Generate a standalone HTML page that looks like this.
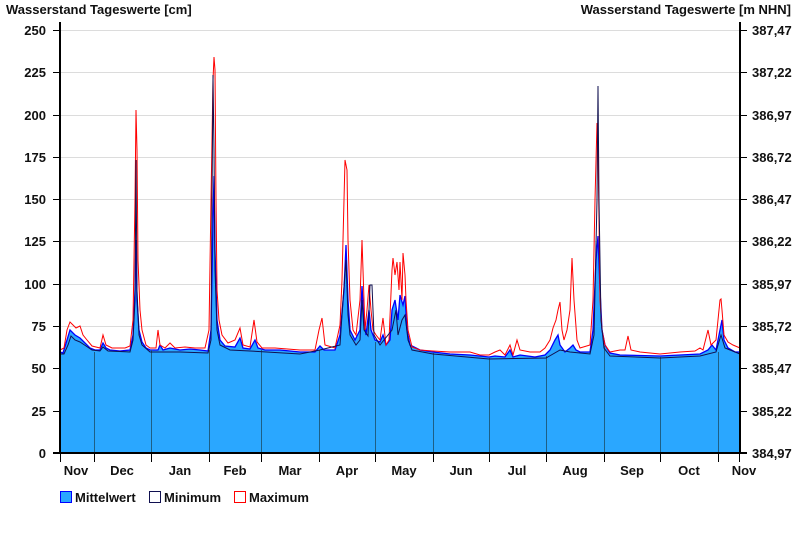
<!DOCTYPE html>
<html><head><meta charset="utf-8">
<style>
html,body{margin:0;padding:0;background:#fff;width:800px;height:550px;overflow:hidden}
svg text{font-family:"Liberation Sans",Arial,sans-serif;font-weight:bold;font-size:13px;fill:#111}
</style></head><body>
<svg width="800" height="550" viewBox="0 0 800 550" xmlns="http://www.w3.org/2000/svg">
<text x="6" y="14">Wasserstand Tageswerte [cm]</text>
<text x="791" y="14" text-anchor="end">Wasserstand Tageswerte [m NHN]</text>
<!-- grid -->
<g stroke="#dcdcdc" stroke-width="1">
<line x1="60" x2="740" y1="30.5" y2="30.5"/><line x1="60" x2="740" y1="72.5" y2="72.5"/>
<line x1="60" x2="740" y1="115.5" y2="115.5"/><line x1="60" x2="740" y1="157.5" y2="157.5"/>
<line x1="60" x2="740" y1="199.5" y2="199.5"/><line x1="60" x2="740" y1="241.5" y2="241.5"/>
<line x1="60" x2="740" y1="284.5" y2="284.5"/><line x1="60" x2="740" y1="326.5" y2="326.5"/>
<line x1="60" x2="740" y1="368.5" y2="368.5"/><line x1="60" x2="740" y1="411.5" y2="411.5"/>
</g>
<!-- mean fill -->
<polygon fill="#2aa7ff" stroke="#0000ff" stroke-width="1.3" points="60,352 63,353 67,340 70,330 75,335 80,338 85,343 90,348 95,350 100,350 103,343 106,348 110,350 120,351 130,350 133,335 135,290 136,240 137,300 139,330 142,342 146,348 150,350 158,350 160,345 163,350 170,348 180,350 190,349 200,350 208,351 211,330 213,220 214,176 215,250 217,320 220,340 225,346 235,347 240,338 243,348 250,349 255,340 258,348 265,350 280,350 300,352 315,352 320,346 324,350 335,350 340,335 344,290 346,245 348,300 350,330 355,340 360,330 362,286 364,320 366,335 369,310 371,330 375,340 380,342 383,335 386,345 390,340 392,310 395,300 398,320 400,295 403,305 405,296 407,330 410,345 420,350 433,352 450,354 470,355 489,357 495,356 505,357 510,350 513,357 520,355 535,357 545,355 550,350 555,340 558,335 560,345 565,352 570,348 573,345 576,350 580,352 590,352 593,330 596,260 598,236 600,290 602,330 605,345 610,353 620,355 660,356 680,355 700,354 708,350 712,345 716,350 720,330 722,320 724,340 728,348 735,352 740,352 740,453 60,453"/>
<!-- month lines -->
<g stroke="#1d5f86" stroke-width="1">
<line x1="94.5" x2="94.5" y1="352" y2="453"/><line x1="151.5" x2="151.5" y1="350" y2="453"/>
<line x1="209.5" x2="209.5" y1="350" y2="453"/><line x1="261.5" x2="261.5" y1="350" y2="453"/>
<line x1="319.5" x2="319.5" y1="350" y2="453"/><line x1="375.5" x2="375.5" y1="342" y2="453"/>
<line x1="433.5" x2="433.5" y1="353" y2="453"/><line x1="489.5" x2="489.5" y1="358" y2="453"/>
<line x1="546.5" x2="546.5" y1="356" y2="453"/><line x1="604.5" x2="604.5" y1="346" y2="453"/>
<line x1="660.5" x2="660.5" y1="357" y2="453"/><line x1="718.5" x2="718.5" y1="352" y2="453"/>
</g>
<!-- max -->
<polyline fill="none" stroke="#ff0000" stroke-width="1" points="60,350 64,348 67,330 70,322 73,325 76,328 80,326 83,335 87,340 92,346 100,348 103,335 106,345 112,348 125,348 130,346 133,320 135,200 136,110 137,150 138,260 140,310 142,330 146,345 150,348 156,348 158,330 160,345 165,348 170,343 175,348 185,347 195,348 205,348 209,330 211,200 212,140 213,80 214,57 215,70 216,200 217,290 219,320 222,335 228,343 235,340 240,328 243,345 250,347 254,320 257,342 262,348 275,348 300,350 315,350 319,330 322,318 325,345 335,348 340,325 342,280 344,200 345,160 347,170 348,240 350,300 353,330 356,335 360,300 362,240 363,270 365,330 367,310 369,285 371,310 373,330 376,335 380,340 383,318 386,345 389,340 392,270 393,258 395,275 397,262 399,290 400,262 402,300 403,253 405,275 406,300 408,330 412,347 420,350 433,351 450,352 470,352 480,355 489,355 495,352 500,350 505,355 510,345 513,355 517,340 520,350 530,352 540,352 545,348 550,340 553,328 556,320 558,310 560,302 562,330 564,340 567,330 570,310 572,258 574,300 577,340 580,348 590,345 593,300 595,200 597,123 598,150 599,220 600,300 602,330 605,345 610,352 620,350 625,350 628,336 631,350 640,352 660,354 680,352 695,351 700,348 703,350 708,330 711,345 716,340 720,300 721,299 722,310 724,335 728,342 733,345 740,348"/>
<!-- min -->
<polyline fill="none" stroke="#101050" stroke-width="1" points="60,354 64,354 68,345 71,336 75,340 80,342 86,346 92,350 100,351 103,347 108,351 130,352 133,340 135,300 136,160 137,290 139,335 142,345 150,352 180,352 208,353 211,340 212,200 213,75 214,150 215,270 217,330 220,345 230,350 250,351 300,354 320,350 340,345 343,300 346,260 348,315 350,335 356,345 360,340 362,300 364,330 368,336 370,285 372,285 374,335 380,345 392,330 396,310 398,335 402,320 405,315 408,340 412,350 433,354 489,359 546,358 560,350 570,352 590,354 594,335 597,200 598,86 599,200 601,320 604,348 610,356 660,358 700,356 716,352 721,335 725,348 740,354"/>
<!-- axes -->
<g stroke="#000" stroke-width="2" fill="none">
<line x1="60" x2="60" y1="22" y2="454"/><line x1="740" x2="740" y1="22" y2="454"/>
<line x1="53" x2="747" y1="453" y2="453"/>
</g>
<g stroke="#000" stroke-width="1">
<line x1="53" x2="60" y1="30.5" y2="30.5"/><line x1="53" x2="60" y1="72.5" y2="72.5"/><line x1="53" x2="60" y1="115.5" y2="115.5"/><line x1="53" x2="60" y1="157.5" y2="157.5"/><line x1="53" x2="60" y1="199.5" y2="199.5"/><line x1="53" x2="60" y1="241.5" y2="241.5"/><line x1="53" x2="60" y1="284.5" y2="284.5"/><line x1="53" x2="60" y1="326.5" y2="326.5"/><line x1="53" x2="60" y1="368.5" y2="368.5"/><line x1="53" x2="60" y1="411.5" y2="411.5"/>
<line x1="740" x2="747" y1="30.5" y2="30.5"/><line x1="740" x2="747" y1="72.5" y2="72.5"/><line x1="740" x2="747" y1="115.5" y2="115.5"/><line x1="740" x2="747" y1="157.5" y2="157.5"/><line x1="740" x2="747" y1="199.5" y2="199.5"/><line x1="740" x2="747" y1="241.5" y2="241.5"/><line x1="740" x2="747" y1="284.5" y2="284.5"/><line x1="740" x2="747" y1="326.5" y2="326.5"/><line x1="740" x2="747" y1="368.5" y2="368.5"/><line x1="740" x2="747" y1="411.5" y2="411.5"/>
<line x1="60.5" x2="60.5" y1="453" y2="462"/><line x1="94.5" x2="94.5" y1="453" y2="462"/><line x1="151.5" x2="151.5" y1="453" y2="462"/><line x1="209.5" x2="209.5" y1="453" y2="462"/><line x1="261.5" x2="261.5" y1="453" y2="462"/><line x1="319.5" x2="319.5" y1="453" y2="462"/><line x1="375.5" x2="375.5" y1="453" y2="462"/><line x1="433.5" x2="433.5" y1="453" y2="462"/><line x1="489.5" x2="489.5" y1="453" y2="462"/><line x1="546.5" x2="546.5" y1="453" y2="462"/><line x1="604.5" x2="604.5" y1="453" y2="462"/><line x1="660.5" x2="660.5" y1="453" y2="462"/><line x1="718.5" x2="718.5" y1="453" y2="462"/><line x1="739.5" x2="739.5" y1="453" y2="462"/>
</g>
<g text-anchor="end">
<text x="46" y="35">250</text><text x="46" y="77">225</text><text x="46" y="120">200</text><text x="46" y="162">175</text><text x="46" y="204">150</text><text x="46" y="246">125</text><text x="46" y="289">100</text><text x="46" y="331">75</text><text x="46" y="373">50</text><text x="46" y="416">25</text><text x="46" y="458">0</text>
</g>
<g text-anchor="start">
<text x="752" y="35">387,47</text><text x="752" y="77">387,22</text><text x="752" y="120">386,97</text><text x="752" y="162">386,72</text><text x="752" y="204">386,47</text><text x="752" y="246">386,22</text><text x="752" y="289">385,97</text><text x="752" y="331">385,72</text><text x="752" y="373">385,47</text><text x="752" y="416">385,22</text><text x="752" y="458">384,97</text>
</g>
<g text-anchor="middle">
<text x="76" y="475">Nov</text><text x="122" y="475">Dec</text><text x="180" y="475">Jan</text><text x="235" y="475">Feb</text><text x="290" y="475">Mar</text><text x="347" y="475">Apr</text><text x="404" y="475">May</text><text x="461" y="475">Jun</text><text x="517" y="475">Jul</text><text x="575" y="475">Aug</text><text x="632" y="475">Sep</text><text x="689" y="475">Oct</text><text x="744" y="475">Nov</text>
</g>
<rect x="60.5" y="491.5" width="11" height="11" fill="#2aa7ff" stroke="#0000ff"/>
<text x="75" y="502">Mittelwert</text>
<rect x="149.5" y="491.5" width="11" height="11" fill="#fff" stroke="#101050"/>
<text x="164" y="502">Minimum</text>
<rect x="234.5" y="491.5" width="11" height="11" fill="#fff" stroke="#ff0000"/>
<text x="249" y="502">Maximum</text>
</svg>
</body></html>
